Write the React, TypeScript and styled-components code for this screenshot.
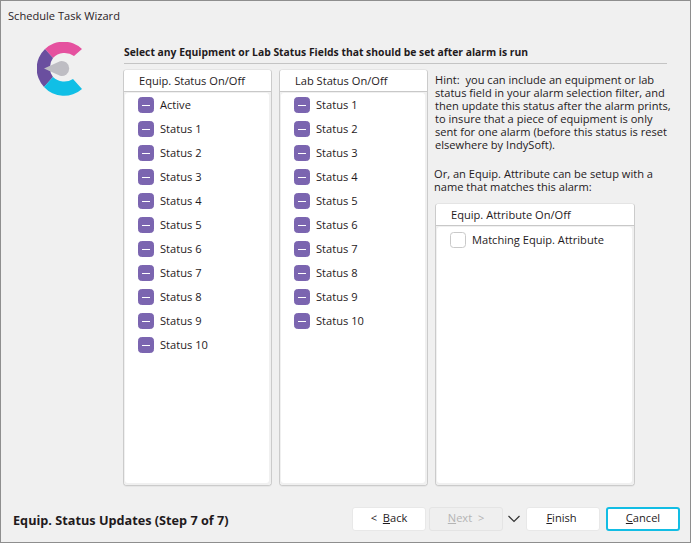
import React from "react";
import styled, { createGlobalStyle } from "styled-components";

const Global = createGlobalStyle`
  html, body { margin: 0; padding: 0; background: #f0f0f0; }
  * { box-sizing: border-box; }
`;
const Win = styled.div`
  width: 691px; height: 543px; background: #f0f0f0; border: 1px solid #8e8e8e;
  font-family: "Open Sans", "Noto Sans", sans-serif; font-size: 11.1px; color: #1f1a1c;
  display: flex; flex-direction: column;
`;
const TitleBar = styled.div`
  height: 29px; padding: 7px 0 0 7px; font-size: 11.1px; line-height: 16px; color: #2a2226;
`;
const Body = styled.div`
  flex: 1; display: flex; min-height: 0;
`;
const Side = styled.div`
  width: 122px; padding: 12px 0 0 36px;
`;
const Main = styled.div`
  width: 544px; display: flex; flex-direction: column;
`;
const Heading = styled.div`
  height: 20px; font-weight: 700; font-size: 10.35px; line-height: 16px; margin: 14px 0 5px 1px;
  border-bottom: 1px solid #c4c4c4; white-space: nowrap;
`;
const Columns = styled.div`
  display: flex; gap: 7px; height: 417px;
`;
const Panel = styled.div<{ $w: number }>`
  width: ${(p) => p.$w}px; display: flex; flex-direction: column; background: #fff;
  border: 1px solid #cbcbcb; border-top-color: #e4e4e4; border-radius: 4px; overflow: hidden;
  box-shadow: 0 1px 0 #e6e6e6;
`;
const PanelHead = styled.div`
  height: 22px; padding-left: 15px; line-height: 21px; background: #fff;
  border-bottom: 1px solid #c8c8c8; flex: none;
`;
const Track = styled.div`
  flex: 1; display: flex; flex-direction: column; background: #f0f0f0; min-height: 0;
`;
const List = styled.div<{ $top?: number }>`
  flex: 1; background: #fff; margin: 1px 2px 2px 1px; border-radius: 3px;
  padding-top: ${(p) => p.$top ?? 0}px;
`;
const Row = styled.div`
  height: 24px; display: flex; align-items: center; padding-left: 13px; gap: 6px;
`;
const Label = styled.span`
  margin-top: -2px;
`;
const Check = styled.span<{ $on?: boolean }>`
  width: 16px; height: 16px; border-radius: 3.5px; flex: none; display: flex; align-items: center; justify-content: center;
  background: ${(p) => (p.$on ? "#7b65b0" : "#fff")};
  border: 1px solid ${(p) => (p.$on ? "#7b65b0" : "#c9c9c9")};
  &::after { content: ""; display: ${(p) => (p.$on ? "block" : "none")}; width: 8px; height: 1px; background: #fff; }
`;
const RightCol = styled.div`
  width: 200px; display: flex; flex-direction: column;
`;
const Hint = styled.div<{ $first?: boolean }>`
  font-size: 11.1px; line-height: 13px; white-space: pre;
  margin-top: ${(p) => (p.$first ? 4 : 0)}px;
  margin-left: ${(p) => (p.$first ? 0 : -1)}px;
`;
const Gap = styled.div`
  height: 16px;
`;
const AttrPanel = styled(Panel)`
  margin-top: 10px; flex: 1;
`;
const Footer = styled.div`
  height: 56px; display: flex; align-items: center; padding: 9px 10px 0 12px;
`;
const Step = styled.div`
  font-weight: 700; font-size: 12.7px; flex: 1; margin-top: 2px;
`;
const Btn = styled.div<{ $off?: boolean; $focus?: boolean }>`
  width: 74px; height: 24px; border-radius: 3px; display: flex; align-items: center; justify-content: center;
  padding-bottom: 2px;
  background: ${(p) => (p.$off ? "#efefef" : "#fff")};
  color: ${(p) => (p.$off ? "#b4b4b4" : "#1f1a1c")};
  border: ${(p) => (p.$focus ? "2px solid #12bde4" : p.$off ? "1px solid #e4e4e4" : "1px solid #e8e8e8")};
  white-space: pre;
  u { text-underline-offset: 1px; }
`;
const NextBtn = styled(Btn)`
  margin-left: 3px;
`;
const Chevron = styled.svg`
  width: 12px; height: 8px; margin: 0 6px 0 5px; flex: none;
`;
const FinishBtn = styled(Btn)`
  margin-right: 6px;
  padding-right: 3px;
`;

const Logo = () => (
  <svg width="54" height="54" viewBox="0 0 54 54">
    <path d="M8 7A27 27 0 0 1 45 7L37 14A16 16 0 0 0 16 16Z" fill="#e5519f" />
    <path d="M8 7A27 27 0 0 0 7 45L16 35A16 16 0 0 1 16 16Z" fill="#6a4f9f" />
    <path d="M7 45A27 27 0 0 0 45 47L36 37A16 16 0 0 1 16 35Z" fill="#10bfe6" />
    <path d="M7 26.5L23 19.2A7.5 7.5 0 1 1 23 33.8Z" fill="#bebdc3" />
  </svg>
);

const equip = ["Active", ...Array.from({ length: 10 }, (_, i) => `Status ${i + 1}`)];
const lab = Array.from({ length: 10 }, (_, i) => `Status ${i + 1}`);

const StatusPanel = ({ title, items }: { title: string; items: string[] }) => (
  <Panel $w={149}>
    <PanelHead>{title}</PanelHead>
    <Track>
      <List>
        {items.map((t) => (
          <Row key={t}>
            <Check $on />
            <Label>{t}</Label>
          </Row>
        ))}
      </List>
    </Track>
  </Panel>
);

export default function App() {
  return (
    <Win>
      <Global />
      <TitleBar>Schedule Task Wizard</TitleBar>
      <Body>
        <Side>
          <Logo />
        </Side>
        <Main>
          <Heading>Select any Equipment or Lab Status Fields that should be set after alarm is run</Heading>
          <Columns>
            <StatusPanel title="Equip. Status On/Off" items={equip} />
            <StatusPanel title="Lab Status On/Off" items={lab} />
            <RightCol>
              <Hint $first>{`Hint:  you can include an equipment or lab
status field in your alarm selection filter, and
then update this status after the alarm prints,
to insure that a piece of equipment is only
sent for one alarm (before this status is reset
elsewhere by IndySoft).`}</Hint>
              <Gap />
              <Hint>{`Or, an Equip. Attribute can be setup with a
name that matches this alarm:`}</Hint>
              <AttrPanel $w={200}>
                <PanelHead>Equip. Attribute On/Off</PanelHead>
                <Track>
                  <List $top={1}>
                    <Row>
                      <Check />
                      <Label>Matching Equip. Attribute</Label>
                    </Row>
                  </List>
                </Track>
              </AttrPanel>
            </RightCol>
          </Columns>
        </Main>
      </Body>
      <Footer>
        <Step>Equip. Status Updates (Step 7 of 7)</Step>
        <Btn>{"<  "}<u>B</u>ack</Btn>
        <NextBtn $off><u>N</u>ext{"  >"}</NextBtn>
        <Chevron viewBox="0 0 12 8"><path d="M0.5 1L6 6.5L11.5 1" fill="none" stroke="#333" strokeWidth="1.2" /></Chevron>
        <FinishBtn><u>F</u>inish</FinishBtn>
        <Btn $focus><u>C</u>ancel</Btn>
      </Footer>
    </Win>
  );
}
